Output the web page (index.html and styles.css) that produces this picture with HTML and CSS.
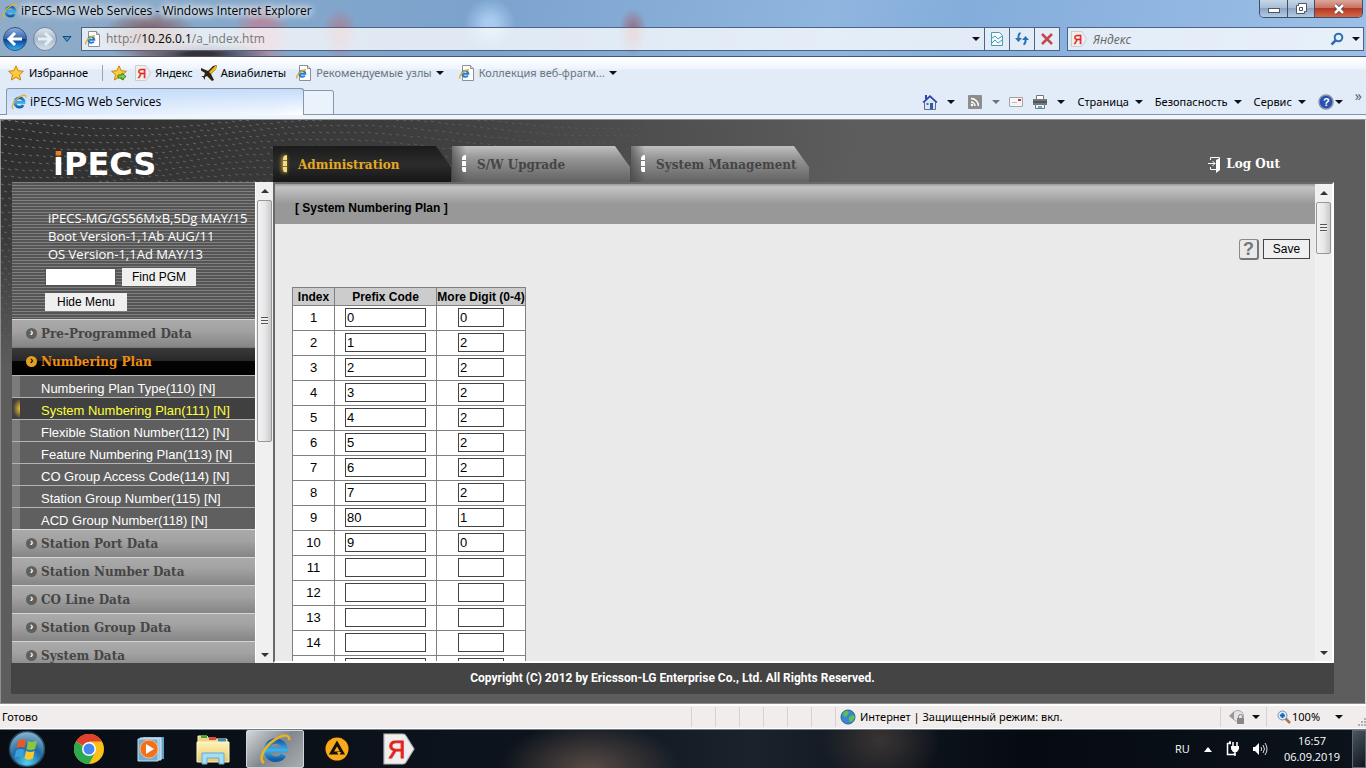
FILE: index.html
```html
<!DOCTYPE html>
<html lang="ru">
<head>
  <meta charset="UTF-8" />
  <meta name="viewport" content="width=device-width, initial-scale=1.0"/>
  <title>iPECS-MG Web Services</title>
  <link rel="stylesheet" href="styles.css">
</head>
<body>

<!-- shared icons -->
<svg class="defs" aria-hidden="true">
  <defs>
    <linearGradient id="eBlue" x1="0" y1="0" x2="0" y2="1">
      <stop offset="0" stop-color="#1c5fae"/><stop offset=".5" stop-color="#3fb2ea"/><stop offset="1" stop-color="#0f5ea8"/>
    </linearGradient>
    <radialGradient id="orb" cx=".5" cy=".9" r=".9">
      <stop offset="0" stop-color="#4fd2f5"/><stop offset=".5" stop-color="#1f6aa5"/><stop offset="1" stop-color="#8fb6cc"/>
    </radialGradient>
    <linearGradient id="goBlue" x1="0" y1="0" x2="0" y2="1">
      <stop offset="0" stop-color="#8fb0dc"/><stop offset=".48" stop-color="#3566b0"/><stop offset=".5" stop-color="#0a3791"/><stop offset="1" stop-color="#35b5f5"/>
    </linearGradient>
    <linearGradient id="goGray" x1="0" y1="0" x2="0" y2="1">
      <stop offset="0" stop-color="#dfe7f0"/><stop offset=".5" stop-color="#a9b9cb"/><stop offset="1" stop-color="#d5e2ee"/>
    </linearGradient>
    <linearGradient id="folder" x1="0" y1="0" x2="0" y2="1">
      <stop offset="0" stop-color="#fdf3b8"/><stop offset="1" stop-color="#e9c868"/>
    </linearGradient>
    <symbol id="ie" viewBox="0 0 16 16">
      <path d="M12.300 11A4.600 4.600 0 1 1 13 8.400H4.500" fill="none" stroke="url(#eBlue)" stroke-width="2.800"/>
      <path d="M2.500 15C-.5 13 2.500 7 8 3.300 12 .6 15.500 .4 15 3.500" fill="none" stroke="#e6b325" stroke-width="1.300"/>
    </symbol>
    <symbol id="page-ie" viewBox="0 0 16 16">
      <path d="M3.500 .5h8l3 3v12h-11z" fill="#fff" stroke="#8a8f98"/>
      <path d="M11.500 .5v3h3" fill="#ddd" stroke="#8a8f98"/>
      <path d="M8.800 10.500A3 3 0 1 1 9.300 8.800H3.500" fill="none" stroke="#1f7fcf" stroke-width="2"/>
      <path d="M1 13.500C-.5 11 4 5.500 10 4.500" fill="none" stroke="#e6a925" stroke-width="1.300"/>
    </symbol>
    <symbol id="star" viewBox="0 0 16 16">
      <path d="M8 .8l2.200 4.900 5.200.6-3.900 3.500 1.100 5.200L8 12.300 3.400 15l1.100-5.200L.6 6.300l5.200-.6z" fill="#ffc93a" stroke="#c98412"/>
    </symbol>
    <symbol id="yandex" viewBox="0 0 16 16">
      <path d="M.5 .5h9.500q1 0 1.500 1l4 6.500-4 6.500q-.5 1-1.500 1H.5z" fill="#f0efef" stroke="#b9b6b6" stroke-width=".6"/>
      <text x="2.500" y="12.500" font-family="Liberation Sans, sans-serif" font-size="12" fill="#e2231a" stroke="#e2231a" stroke-width=".4">Я</text>
    </symbol>
  </defs>
</svg>

<div class="browser">
  <header class="titlebar">
    <svg class="icon"><use href="#ie"/></svg>
    <span class="window-title">iPECS-MG Web Services - Windows Internet Explorer</span>
    <div class="window-buttons">
      <button type="button" aria-label="Свернуть"><svg width="14" height="12"><rect x="1.500" y="5.500" width="11" height="4" fill="#fff" stroke="#4c5665"/></svg></button>
      <button type="button" aria-label="Развернуть"><svg width="14" height="13"><path d="M4.500 1.500h8v8h-2v2h-8v-8h2z" fill="#fff" stroke="#4c5665"/><path d="M5.500 5.500h3v3h-3z" fill="none" stroke="#4c5665"/></svg></button>
      <button type="button" class="close" aria-label="Закрыть"><svg width="14" height="12"><path d="M3 2l8 8M11 2l-8 8" stroke="#5b3a3a" stroke-width="4"/><path d="M3 2l8 8M11 2l-8 8" stroke="#fff" stroke-width="2.500"/></svg></button>
    </div>
  </header>

  <div class="address-row">
    <div class="nav-buttons">
      <button type="button" aria-label="Назад"><svg width="26" height="26"><circle cx="13" cy="13" r="11.500" fill="url(#goBlue)" stroke="#33547f"/><path d="M20 13H8M13 7l-6 6 6 6" fill="none" stroke="#fff" stroke-width="3"/></svg></button>
      <button type="button" aria-label="Вперед"><svg width="26" height="26"><circle cx="13" cy="13" r="11.500" fill="url(#goGray)" stroke="#6f8298"/><path d="M6 13h12M13 7l6 6-6 6" fill="none" stroke="#e6edf4" stroke-width="3"/></svg></button>
      <button type="button" aria-label="Последние страницы"><svg width="10" height="6"><path d="M1 .5h8L5 5.500z" fill="#4a94d0" stroke="#1d4674"/></svg></button>
    </div>
    <div class="address-box">
      <svg class="icon"><use href="#page-ie"/></svg>
      <span class="url">http://<b>10.26.0.1</b>/a_index.htm</span>
      <i class="caret"></i>
      <button type="button" aria-label="Режим совместимости"><svg width="14" height="16"><path d="M1.500 1.500h8l3 3v10h-11z" fill="#f4fafc" stroke="#4b9cb8"/><path d="M2 7l3-2 3 3 4-3M2 12l3-3 3 3 4-3" fill="none" stroke="#3fa0bb"/></svg></button>
      <button type="button" aria-label="Обновить"><svg width="16" height="16"><path d="M6.500 2Q4 3 4.500 8M9.500 13.500q2.500-1 2-6" fill="none" stroke="#2b6fb5" stroke-width="2"/><path d="M1 7l3.500 4L8 7zM8 9l3.500-4L15 9z" fill="#2b6fb5"/></svg></button>
      <button type="button" aria-label="Остановить"><svg width="14" height="14"><path d="M2 2l10 10M12 2L2 12" stroke="#c4474b" stroke-width="2.500"/></svg></button>
    </div>
    <div class="search-box">
      <svg class="icon"><use href="#yandex"/></svg>
      <input type="text" placeholder="Яндекс" aria-label="Поиск">
      <button type="button" aria-label="Найти"><svg width="14" height="14"><circle cx="8.500" cy="5.500" r="3.800" fill="none" stroke="#2c6fb8" stroke-width="2"/><path d="M6 8L1.500 12.500" stroke="#2c6fb8" stroke-width="2.500"/></svg></button>
      <i class="caret"></i>
    </div>
  </div>

  <nav class="favorites">
    <a href="#" class="fav-main"><svg class="icon"><use href="#star"/></svg>Избранное</a>
    <a href="#" class="fav-add" aria-label="Добавить"><svg class="icon"><use href="#star"/><path d="M7 10h4V8l4 3.500-4 3.500v-2H7z" fill="#7fd04c" stroke="#2f8a1d"/></svg></a>
    <a href="#"><svg class="icon"><use href="#yandex"/></svg>Яндекс</a>
    <a href="#"><svg class="icon"><path d="M0 3l7 3 5-5 4-1-1 4-5 5 3 6-2 1-5-5-2 1v3l-2-3-2-1h3l1-3-5-3z" fill="#2d2410"/><path d="M8 7l6-6 2-1-1 4-5 5z" fill="#e8b91f"/></svg>Авиабилеты</a>
    <a href="#" class="dim"><svg class="icon"><use href="#page-ie"/></svg>Рекомендуемые узлы <i class="caret"></i></a>
    <a href="#" class="dim"><svg class="icon"><use href="#page-ie"/></svg>Коллекция веб-фрагм... <i class="caret"></i></a>
  </nav>

  <div class="tab-row">
    <a href="#" class="browser-tab"><svg class="icon"><use href="#ie"/></svg>iPECS-MG Web Services</a>
    <button type="button" class="new-tab" aria-label="Новая вкладка"></button>
    <div class="commands">
      <a href="#" aria-label="Домашняя страница"><svg class="icon"><path d="M2.500 8v7.500h11V8L8 3z" fill="#dce6f3" stroke="#5b6f96"/><path d="M1 8.500L8 2l7 6.500" fill="none" stroke="#2c3fae" stroke-width="1.500"/><path d="M3 1h2v4H3z" fill="#3443b4"/><path d="M8 9h3v6H8z" fill="#2e5f9d"/><path d="M4.500 9h2v2h-2z" fill="#4b6ea5"/></svg><i class="caret"></i></a>
      <a href="#" aria-label="Каналы"><svg class="icon"><rect x="1" y="1" width="14" height="14" rx="1" fill="#8d8d8d"/><path d="M4 8a4 4 0 0 1 4 4M4 4.500A7.500 7.500 0 0 1 11.500 12" fill="none" stroke="#fff" stroke-width="1.500"/><circle cx="5" cy="11" r="1.300" fill="#fff"/></svg><i class="caret pale"></i></a>
      <a href="#" class="mail" aria-label="Почта"><svg class="icon"><path d="M1.500 3.500h13v9h-13z" fill="#f5f5f5" stroke="#a5a5a5"/><path d="M10 5h3v2h-3z" fill="#d9372c"/><path d="M4 8.500h5" stroke="#bbb"/></svg></a>
      <a href="#" aria-label="Печать"><svg class="icon"><path d="M4.500 1.500h7v4h-7z" fill="#fff" stroke="#777"/><path d="M1 5h14v6H1z" fill="#777"/><path d="M1 8h14" stroke="#333"/><path d="M3.500 10.500h9v4h-9z" fill="#e8f5fa" stroke="#777"/><path d="M6 12h4v2H6z" fill="#56b4d6"/></svg><i class="caret"></i></a>
      <a href="#" class="wide">Страница<i class="caret"></i></a>
      <a href="#" class="wide">Безопасность<i class="caret"></i></a>
      <a href="#" class="wide">Сервис<i class="caret"></i></a>
      <a href="#" class="help" aria-label="Справка"><svg class="icon"><circle cx="8" cy="8" r="7" fill="#2b50b0" stroke="#8793a8" stroke-width="1.500"/><text x="5" y="12" font-family="Liberation Sans, sans-serif" font-size="11" font-weight="bold" fill="#fff">?</text></svg><i class="caret"></i></a>
      <span class="more">»</span>
    </div>
  </div>
</div>

<main class="page">
  <svg class="dots" id="dots" aria-hidden="true"></svg>

  <div class="page-top">
    <div class="logo"><span>i</span>PECS</div>
    <nav class="tabs">
      <a href="#" class="tab active">Administration</a>
      <a href="#" class="tab">S/W Upgrade</a>
      <a href="#" class="tab">System Management</a>
    </nav>
    <a href="#" class="logout"><svg width="13" height="17"><path d="M2.500 4V1.500h9v12h-9V11M0 7.500h7M4.500 5L7 7.500 4.500 10" fill="none" stroke="#fff"/><path d="M8 4l4-2v12l-4 3z" fill="#fff"/></svg>Log Out</a>
  </div>

  <div class="frames">
    <aside class="sidebar">
      <div class="info">
        <p>iPECS-MG/GS56MxB,5Dg MAY/15</p>
        <p>Boot Version-1,1Ab AUG/11</p>
        <p>OS Version-1,1Ad MAY/13</p>
        <div class="find"><input type="text" aria-label="PGM"><button type="button">Find PGM</button></div>
        <button type="button" class="hide">Hide Menu</button>
      </div>
      <a href="#" class="group">Pre-Programmed Data</a>
      <a href="#" class="group open">Numbering Plan</a>
      <ul class="sub">
        <li><a href="#">Numbering Plan Type(110) [N]</a></li>
        <li class="current"><a href="#">System Numbering Plan(111) [N]</a></li>
        <li><a href="#">Flexible Station Number(112) [N]</a></li>
        <li><a href="#">Feature Numbering Plan(113) [N]</a></li>
        <li><a href="#">CO Group Access Code(114) [N]</a></li>
        <li><a href="#">Station Group Number(115) [N]</a></li>
        <li><a href="#">ACD Group Number(118) [N]</a></li>
      </ul>
      <a href="#" class="group">Station Port Data</a>
      <a href="#" class="group">Station Number Data</a>
      <a href="#" class="group">CO Line Data</a>
      <a href="#" class="group">Station Group Data</a>
      <a href="#" class="group">System Data</a>
    </aside>
    <div class="scrollbar side-scroll"><i class="up"></i><div class="thumb"></div><i class="down"></i></div>

    <section class="content">
      <div class="content-main">
        <h1>[ System Numbering Plan ]</h1>
        <div class="actions">
          <button type="button" class="help-btn" aria-label="Help">?</button>
          <button type="button" class="save">Save</button>
        </div>
        <table class="plan">
          <thead>
            <tr><th class="col-index">Index</th><th class="col-prefix">Prefix Code</th><th class="col-more">More Digit (0-4)</th></tr>
          </thead>
          <tbody id="rows"></tbody>
        </table>
      </div>
      <div class="scrollbar"><i class="up"></i><div class="thumb"></div><i class="down"></i></div>
    </section>
  </div>

  <footer class="copyright">Copyright (C) 2012 by Ericsson-LG Enterprise Co., Ltd. All Rights Reserved.</footer>
</main>

<div class="statusbar">
  <span class="state">Готово</span>
  <div class="cells"><i></i><i></i><i></i><i></i><i></i><i></i></div>
  <div class="zone"><svg class="icon"><circle cx="8" cy="8" r="7" fill="#3a86cf" stroke="#2a5f9a"/><path d="M3 4q4-4 6-1l-2 4-3 1zM9 8l4-2 2 2-3 5-3-1z" fill="#5fc04b"/></svg>Интернет | Защищенный режим: вкл.</div>
  <div class="protect"><svg class="icon"><circle cx="9" cy="7" r="5.500" fill="#e4e4e4" stroke="#aaa"/><path d="M5 2v9L0 7z" fill="#999"/><path d="M8 9h7v6H8z" fill="#888"/><path d="M9.500 9V7.500a2 2 0 0 1 4 0V9" fill="none" stroke="#888"/></svg><i class="caret"></i></div>
  <div class="zoom"><svg width="14" height="14"><path d="M8 8l5 5" stroke="#a87848" stroke-width="2.500"/><circle cx="5.500" cy="5.500" r="4.500" fill="#d5ebfa" stroke="#6f93bd"/><path d="M5.500 3v5M3 5.500h5" stroke="#1f5fb5" stroke-width="2"/></svg>100%<i class="caret"></i><svg class="grip" width="9" height="9"><path d="M7 1h2M7 4h2M4 4h2M7 7h2M4 7h2M1 7h2" stroke="#b5b0ae" stroke-width="2"/></svg></div>
</div>

<div class="taskbar">
  <button type="button" class="start" aria-label="Пуск"><svg width="38" height="38" viewBox="0 0 38 38"><circle cx="19" cy="19" r="17.500" fill="url(#orb)" stroke="#27455c" stroke-width="1.500"/><path d="M10 11q4-3 8-1l-1.500 8q-4-2-8 .5z" fill="#e8592a"/><path d="M20 11q4 2 9-.5L27 19q-4 2-8.500 0z" fill="#8cc63e"/><path d="M8 20.500q4-3 8-.5l-1.500 7.500q-4-2-8 .5z" fill="#3d9ee0"/><path d="M18 21q4 2 8.500 0L25 28.500q-4 2.500-8.500 0z" fill="#fbc72e"/></svg></button>
  <button type="button" class="app" aria-label="Chrome"><svg width="30" height="30" viewBox="0 0 30 30"><circle cx="15" cy="15" r="15" fill="#fbc116"/><path d="M2 7.500A15 15 0 0 0 15 30l6-11.500-6 3.500z" fill="#2da94f"/><path d="M2 7.500L9 19l6 3 3-4z" fill="#2da94f"/><path d="M15 15L2 7.500A15 15 0 0 1 28 7.500H15z" fill="#e1402f"/><circle cx="15" cy="15" r="7" fill="#fff"/><circle cx="15" cy="15" r="5.500" fill="#4688f1"/></svg></button>
  <button type="button" class="app" aria-label="Media Player"><svg width="28" height="26" viewBox="0 0 28 26"><path d="M6 1h21v22H6z" fill="#5f9fc8"/><path d="M3 2h21v22H3z" fill="#9ccbe6" stroke="#d4e8f4"/><path d="M1 3h20v22H1z" fill="#73aed2" stroke="#bfdcec"/><circle cx="12" cy="13" r="9" fill="#f0701c" stroke="#fbb98a"/><path d="M9 8v10l8-5z" fill="#fff"/></svg></button>
  <button type="button" class="app" aria-label="Проводник"><svg width="34" height="32" viewBox="0 0 34 32"><path d="M2 3h9l2 3h18v22H2z" fill="#f0d27c" stroke="#fff3c0"/><path d="M5 2h6v3H5z" fill="#43a047"/><path d="M13 4h7v3h-7z" fill="#d84a3a"/><path d="M22 6h8v3h-8z" fill="#3a8ac8"/><path d="M1 9h32v20H1z" fill="url(#folder)" stroke="#fff6d0"/><path d="M6 31V20h22v11h-5v-6H11v6z" fill="#a8dcf4" stroke="#5badd8"/></svg></button>
  <button type="button" class="app running" aria-label="Internet Explorer"><svg width="32" height="32"><use href="#ie"/></svg></button>
  <button type="button" class="app" aria-label="AIMP"><svg width="28" height="28" viewBox="0 0 28 28"><circle cx="14" cy="14" r="13.500" fill="#15120e"/><circle cx="14" cy="14" r="11.500" fill="#f8a91c"/><path d="M14 8.500L8.500 18h11z" fill="none" stroke="#15120e" stroke-width="3"/><path d="M14 17h4l-2 4z" fill="#f8a91c"/></svg></button>
  <button type="button" class="app" aria-label="Яндекс"><svg width="32" height="32"><use href="#yandex"/></svg></button>
  <div class="tray">
    <span class="lang">RU</span>
    <svg width="8" height="5"><path d="M0 5l4-5 4 5z" fill="#fff"/></svg>
    <svg width="16" height="16"><path d="M7 2.500H3.500v11h7V12M5 1h2" fill="none" stroke="#fff" stroke-width="1.500"/><path d="M7 5h8v3l-2 3h-4L7 8z" fill="#fff"/><path d="M9 1v4M13 1v4M11 11v4" stroke="#fff" stroke-width="1.500"/></svg>
    <svg width="16" height="14"><path d="M1 5h2l4-4v12L3 9H1z" fill="#fff"/><path d="M9 5q1.500 2 0 4M11 3q3 4 0 8M13 1q4 6 0 12" fill="none" stroke="#ddd"/></svg>
    <div class="clock">16:57<br>06.09.2019</div>
    <button type="button" class="desktop" aria-label="Свернуть все окна"></button>
  </div>
</div>

<script>
  const rows = document.getElementById('rows');
  const plan = [
    ['1', '0', '0'], ['2', '1', '2'], ['3', '2', '2'], ['4', '3', '2'], ['5', '4', '2'],
    ['6', '5', '2'], ['7', '6', '2'], ['8', '7', '2'], ['9', '80', '1'], ['10', '9', '0'],
    ['11', '', ''], ['12', '', ''], ['13', '', ''], ['14', '', ''], ['', '', '']
  ];

  plan.forEach(([index, prefix, more]) => {
    const tr = document.createElement('tr');
    tr.innerHTML = `
      <td>${index}</td>
      <td><input class="prefix" type="text" value="${prefix}" aria-label="Prefix Code ${index}"></td>
      <td><input class="more-digit" type="text" value="${more}" aria-label="More Digit ${index}"></td>`;
    rows.appendChild(tr);
  });

  // wavy dash texture in the corner, fades to the right and down
  let dots = '';
  for (let r = 0; r < 42; r++) {
    for (let c = 0; c < 110; c++) {
      const x = c * 7 + (r % 2) * 3;
      const y = r * 7 + Math.sin(c / 11 + r / 7) * 9;
      const a = 0.34 * (1 - x / 720) * (1 - y / 250);
      if (a > 0 && y < 250) dots += `<path d="M${x | 0} ${y | 0}l3 1" stroke="#fff" stroke-opacity="${a.toFixed(2)}"/>`;
    }
  }
  document.getElementById('dots').innerHTML = dots;
</script>

</body>
</html>
```

FILE: styles.css
```css
* {
  box-sizing: border-box;
}

body {
  margin: 0;
  height: 100vh;
  overflow: hidden;
  display: flex;
  flex-direction: column;
  font-family: "Open Sans", "Noto Sans", sans-serif;
  font-size: 12px;
  line-height: 16px;
  color: #000;
}

a {
  color: inherit;
  text-decoration: none;
}

button {
  padding: 0;
  border: 0;
  background: none;
  font: inherit;
  color: inherit;
}

button svg {
  display: block;
  margin: auto;
}

.defs {
  position: absolute;
  width: 0;
  height: 0;
}

.icon {
  width: 16px;
  height: 16px;
  flex: none;
}

.caret {
  border: 4px solid transparent;
  border-top-color: #111;
  border-bottom: 0;
  flex: none;
}

.caret.pale {
  border-top-color: #6c7480;
}

/* browser window */

.browser {
  flex: none;
  background:
    radial-gradient(ellipse 50px 26px at 150px 36px, rgba(138, 90, 90, 0.9) 30%, transparent),
    radial-gradient(ellipse 70px 12px at 200px 54px, #39303c 20%, transparent),
    radial-gradient(ellipse 30px 34px at 262px 36px, rgba(190, 130, 150, 0.8) 40%, transparent),
    radial-gradient(ellipse 18px 26px at 340px 34px, rgba(180, 120, 140, 0.8) 20%, transparent),
    radial-gradient(ellipse 26px 26px at 490px 24px, #a9cbf0 20%, transparent),
    radial-gradient(ellipse 14px 24px at 633px 32px, rgba(160, 100, 115, 0.8) 20%, transparent),
    linear-gradient(100deg, #8facc8, #7ba3cd 35%, #8fb6df 60%, #85addb 70%, #9cc1e8);
}

.titlebar {
  height: 22px;
  display: flex;
  align-items: center;
  padding-left: 2px;
  gap: 3px;
}

.window-title {
  text-shadow: 0 0 6px #fff, 0 0 8px #fff, 0 0 10px #fff;
}

.window-buttons {
  align-self: flex-start;
  margin-left: auto;
  margin-right: 3px;
  display: flex;
  border: 1px solid #3d4f68;
  border-top: 0;
  border-radius: 0 0 5px 5px;
  overflow: hidden;
}

.window-buttons button {
  width: 27px;
  height: 17px;
  background: linear-gradient(#c6d6e8, #a5bbd4 50%, #8aa5c4 50%, #b4cbe4);
}

.window-buttons button + button {
  border-left: 1px solid #3d4f68;
}

.window-buttons .close {
  width: 48px;
  background: linear-gradient(#dba79c, #c9705f 48%, #b33a22 50%, #d4674a);
}

.address-row {
  height: 34px;
  display: flex;
  align-items: center;
  padding: 0 2px;
  gap: 7px;
}

.nav-buttons {
  display: flex;
  align-items: center;
  gap: 4px;
  width: 72px;
}

.address-box,
.search-box {
  height: 24px;
  display: flex;
  align-items: center;
  border: 1px solid #4d6583;
  background: rgba(255, 255, 255, 0.76);
}

.address-box {
  flex: 1;
  padding-left: 3px;
}

.url {
  flex: 1;
  padding-left: 5px;
  color: #777;
}

.url b {
  font-weight: normal;
  color: #000;
}

.address-box .caret {
  margin-right: 4px;
}

.address-box button {
  width: 25px;
  height: 22px;
  border-left: 1px solid #4d6583;
}

.search-box {
  width: 297px;
  padding: 0 3px;
  gap: 6px;
}

.search-box .caret {
  margin-left: 2px;
}

.search-box input {
  flex: 1;
  min-width: 0;
  border: 0;
  padding: 0;
  background: none;
  font: italic 12px "Open Sans", sans-serif;
}

.search-box input::placeholder {
  color: #666;
}

.favorites {
  height: 32px;
  display: flex;
  align-items: center;
  padding-left: 8px;
  gap: 8px;
  border-top: 1px solid #46566d;
  font: 11px/16px "Noto Sans", sans-serif;
  background: linear-gradient(#fff, #eef4fd 12px, #e1ecf8 13px);
}

.favorites a {
  display: flex;
  align-items: center;
  gap: 4px;
}

.favorites .dim {
  color: #6e747c;
  margin: 0 5px 0 2px;
}

.favorites .fav-main {
  gap: 5px;
  padding-right: 14px;
  border-right: 1px solid #9aa5b3;
}

.tab-row {
  height: 31px;
  display: flex;
  padding: 0 4px 4px 6px;
  background: linear-gradient(#e1ecf8 26px, #8494a8 26px, #8494a8 27px, #eef5fc 27px);
}

.browser-tab {
  width: 298px;
  display: flex;
  align-items: center;
  gap: 3px;
  padding-left: 4px;
  border: 1px solid #8996a6;
  border-bottom: 0;
  border-radius: 3px 3px 0 0;
  font-size: 12px;
  background: linear-gradient(#c5dcfa, transparent), linear-gradient(90deg, #dce9fb, #f4f9ff 90%, #fff);
}

.new-tab {
  width: 30px;
  height: 25px;
  margin-top: 2px;
  border: 1px solid #8996a6;
  border-left: 0;
  border-radius: 0 3px 0 0;
  background: #eaf3fc;
}

.commands {
  margin-left: auto;
  display: flex;
  align-items: center;
  gap: 12px;
  font: 11px/16px "Noto Sans", sans-serif;
}

.commands a {
  display: flex;
  align-items: center;
  gap: 9px;
}

.commands .wide {
  gap: 6px;
}

.commands .help {
  gap: 1px;
}

.commands .mail {
  margin: 0 -4px;
}

.more {
  align-self: flex-start;
  font-size: 14px;
  color: #56657c;
}

/* web page */

.page {
  position: relative;
  flex: 1;
  min-height: 0;
  display: flex;
  flex-direction: column;
  padding: 0 31px 9px 10px;
  border: 1px solid #8f8f8f;
  border-right: 1px solid #ddd;
  background: radial-gradient(ellipse 860px 230px at 0 20px, #2c2c2c, #3c3c3c 45%, #5d5d5d) #5d5d5d;
}

.dots {
  position: absolute;
  top: 0;
  left: 0;
  width: 780px;
  height: 250px;
}

.page-top {
  position: relative;
  flex: none;
  height: 62px;
  display: flex;
  align-items: flex-end;
}

.logo {
  width: 262px;
  padding-left: 42px;
  font: bold 32px/36px "DejaVu Sans", sans-serif;
  color: #fff;
}

.logo span {
  color: transparent;
  background: linear-gradient(#ee7d22 11px, #fff 11px);
  -webkit-background-clip: text;
  background-clip: text;
}

.tabs {
  display: flex;
  gap: 1px;
}

.tab {
  position: relative;
  width: 178px;
  height: 36px;
  padding-left: 25px;
  font: bold 12px/38px "DejaVu Serif", serif;
  white-space: nowrap;
  color: #454545;
  background: linear-gradient(90deg, rgba(60, 60, 60, 0.6), transparent 14px), linear-gradient(#c0c0c0, #969696 12px, #626262);
  clip-path: polygon(0 0, 163px 0, 178px 21px, 178px 100%, 0 100%);
}

.tab::before {
  content: "";
  position: absolute;
  top: 9px;
  left: 10px;
  width: 4px;
  height: 18px;
  border-radius: 4px 0 0 4px;
  background: repeating-linear-gradient(#fff 0 5px, #777 5px 6px);
}

.tab.active {
  color: #e5a823;
  background: linear-gradient(#1b1b1b, #2c2c2c 50%, #161616);
}

.tab.active::before {
  background: repeating-linear-gradient(#f5dd83 0 5px, #8c7425 5px 6px);
  box-shadow: -1px 0 4px #d9b642;
}

.logout {
  display: flex;
  align-items: center;
  gap: 5px;
  height: 36px;
  margin-left: auto;
  margin-right: 54px;
  font: bold 12px/36px "DejaVu Serif", serif;
  color: #fff;
}

.frames {
  position: relative;
  flex: 1;
  min-height: 0;
  display: flex;
  padding-left: 1px;
}

.sidebar {
  width: 244px;
  overflow: hidden;
  border-right: 1px solid #fff;
  background: #5f5f5f;
}

.info {
  height: 137px;
  padding: 27px 0 0 33px;
  background: repeating-linear-gradient(#808080 0 1px, #555 1px 3px);
}

.info p {
  margin: 0 0 0 3px;
  font: 13px/18px "Open Sans", sans-serif;
  white-space: nowrap;
  color: #fff;
}

.info .find {
  display: flex;
  gap: 6px;
  margin: 5px 0 7px 0;
}

.info input {
  width: 71px;
  height: 18px;
  border: 1px solid #555;
  background: #fff;
}

.info button {
  height: 18px;
  padding: 0 10px;
  font: 12px/18px "Liberation Sans", Arial, sans-serif;
  background: #efefef;
  display: block;
}

.info .hide {
  padding: 0 12px;
}

.group {
  display: flex;
  align-items: center;
  gap: 4px;
  height: 28px;
  padding-left: 14px;
  border-top: 1px solid #d6d6d6;
  font: bold 12px/28px "DejaVu Serif", serif;
  color: #454545;
  background: linear-gradient(#aaa, #a2a2a2 40%, #858585);
}

.group::before {
  content: "›";
  width: 11px;
  height: 11px;
  border-radius: 50%;
  font: bold 11px/9px "Liberation Sans", sans-serif;
  text-align: center;
  color: #fff;
  background: #5f5f5f;
}

.group.open {
  color: #f08c14;
  border-top-color: #777;
  background: linear-gradient(#3a3a3a, #282828 48%, #050505 50%, #000);
}

.group.open::before {
  color: #000;
  background: #e0a020;
}

.sub {
  margin: 0;
  padding: 0;
  list-style: none;
}

.sub li {
  height: 22px;
  padding-left: 29px;
  border-top: 1px solid #b4b4b4;
  font: 13px/26px "Liberation Sans", Arial, sans-serif;
  white-space: nowrap;
  color: #fff;
  background: linear-gradient(#7b7b7b, #7b7b7b) left / 8px 100% no-repeat;
}

.sub .current {
  color: #ffff3c;
  background: radial-gradient(ellipse 7px 10px at 8px 50%, #f0c030, transparent) left / 8px 100% no-repeat, #404040;
}

.scrollbar {
  width: 17px;
  flex: none;
  display: flex;
  flex-direction: column;
  align-items: center;
  background: #f0f0f0;
}

.scrollbar .up {
  margin: 7px 0;
  border: 4px solid transparent;
  border-top: 0;
  border-bottom-color: #333;
}

.scrollbar .down {
  margin: auto 0 6px;
  border: 4px solid transparent;
  border-bottom: 0;
  border-top-color: #333;
}

.thumb {
  width: 15px;
  height: 52px;
  border: 1px solid #979797;
  border-radius: 2px;
  background:
    repeating-linear-gradient(#555 0 1px, #eee 1px 3px) center / 7px 8px no-repeat,
    linear-gradient(90deg, #f3f3f3, #e8e8ea 50%, #c9cacd);
}

.side-scroll .thumb {
  height: 242px;
}

.content {
  flex: 1;
  min-width: 0;
  display: flex;
  border: 2px solid #696969;
  border-right: 2px solid #fff;
  border-bottom: 2px solid #fff;
  font: 13px/16px "Liberation Sans", Arial, sans-serif;
  background: #eaeaea;
}

.content-main {
  flex: 1;
  min-width: 0;
  overflow: hidden;
}

h1 {
  height: 40px;
  margin: 0;
  padding-left: 20px;
  font: bold 12px/48px "Liberation Sans", Arial, sans-serif;
  background: linear-gradient(#989898, #c4c4c4 3px, #989898 20px);
}

.actions {
  display: flex;
  justify-content: flex-end;
  gap: 4px;
  padding: 15px 5px 0 0;
}

.help-btn {
  width: 20px;
  height: 21px;
  border: 1px solid #8a8a8a;
  border-right: 2px solid #777;
  border-bottom: 2px solid #777;
  border-radius: 3px;
  font: bold 18px/18px "Liberation Sans", sans-serif;
  color: #777;
}

.save {
  width: 47px;
  height: 20px;
  border: 1px solid #444;
  font: 12px/18px "Liberation Sans", Arial, sans-serif;
  background: #f0f0f0;
}

.plan {
  margin: 27px 0 0 17px;
  border-collapse: collapse;
  background: #fff;
}

.plan th,
.plan td {
  height: 25px;
  padding: 0;
  border: 1px solid #808080;
  text-align: center;
}

.plan td {
  padding-bottom: 1px;
}

.plan th {
  height: 18px;
  font-size: 12px;
  white-space: nowrap;
  background: #ccc;
}

.col-index {
  width: 42px;
}

.col-prefix {
  width: 102px;
}

.col-more {
  width: 89px;
}

.plan input {
  display: block;
  height: 19px;
  margin: 0 auto;
  padding: 0 1px;
  border: 1px solid #444;
  font: 13px/16px "Liberation Sans", Arial, sans-serif;
}

.plan .prefix {
  width: 81px;
}

.plan .more-digit {
  width: 46px;
}

.copyright {
  position: relative;
  flex: none;
  height: 31px;
  background: #444;
  color: #fff;
  text-align: center;
  font: bold 12px/30px Roboto, Arial, sans-serif;
}

/* status bar and taskbar */

.statusbar {
  flex: none;
  height: 25px;
  display: flex;
  align-items: center;
  border-top: 2px solid #fff;
  border-bottom: 1px solid #fff;
  font: 11px/16px "Noto Sans", sans-serif;
  background: #f0edec;
}

.state {
  flex: 1;
  padding-left: 2px;
}

.cells {
  display: flex;
}

.cells i {
  width: 24px;
  height: 20px;
  border-left: 1px solid #d6d2d0;
}

.zone,
.protect,
.zoom {
  height: 20px;
  display: flex;
  align-items: center;
  gap: 4px;
  padding-left: 4px;
  border-left: 1px solid #d6d2d0;
}

.zone {
  width: 385px;
}

.protect {
  width: 46px;
  gap: 7px;
  padding-left: 8px;
}

.zoom {
  width: 100px;
  gap: 1px;
  padding-left: 10px;
}

.zoom .caret {
  margin-left: 14px;
}

.grip {
  align-self: flex-end;
  margin-left: auto;
}

.taskbar {
  flex: none;
  height: 39px;
  display: flex;
  align-items: center;
  padding-left: 8px;
  border-top: 1px solid #6c7f8c;
  background:
    radial-gradient(ellipse 90px 50px at 590px 40px, #5a4c46, transparent),
    radial-gradient(ellipse 60px 50px at 880px 10px, #3a3433, transparent),
    linear-gradient(90deg, #080d14, #0d141d 40%, #1a222c 55%, #060b12 75%, #0c131b);
}

.app {
  width: 58px;
  height: 38px;
  margin-right: 4px;
}

.start {
  margin-right: 14px;
}

.running {
  border: 1px solid #cfd6db;
  border-radius: 2px;
  background: linear-gradient(135deg, #d5d8da, #81878d 50%, #a9aeb2);
}

.tray {
  margin-left: auto;
  display: flex;
  align-items: center;
  gap: 12px;
  color: #fff;
  font-size: 11px;
}

.lang {
  margin-right: 2px;
}

.clock {
  margin-left: 4px;
  text-align: center;
}

.desktop {
  width: 14px;
  height: 38px;
  border: 1px solid #5b6873;
  background: linear-gradient(135deg, #4a555f, #10161d);
}
```
